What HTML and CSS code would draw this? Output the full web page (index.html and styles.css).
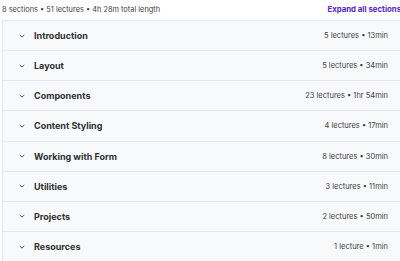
FILE: index.html
```html
<!DOCTYPE html>
<html>
<head>
<meta charset="utf-8">
<link rel="stylesheet" href="styles.css">
</head>
<body>
<div class="wrap">
  <div class="top">
    <span class="summary">8 sections • 51 lectures • 4h 28m total length</span>
    <span class="expand">Expand all sections</span>
  </div>
  <div class="list">
    <div class="row"><span class="chev"><svg viewBox="0 0 10 10" width="8" height="8"><path d="M2.2 3.8 L5 6.4 L7.8 3.8" fill="none" stroke="#4a4c4e" stroke-width="1.2"/></svg></span><span class="title">Introduction</span><span class="meta">5 lectures • 13min</span></div>
    <div class="row"><span class="chev"><svg viewBox="0 0 10 10" width="8" height="8"><path d="M2.2 3.8 L5 6.4 L7.8 3.8" fill="none" stroke="#4a4c4e" stroke-width="1.2"/></svg></span><span class="title">Layout</span><span class="meta">5 lectures • 34min</span></div>
    <div class="row"><span class="chev"><svg viewBox="0 0 10 10" width="8" height="8"><path d="M2.2 3.8 L5 6.4 L7.8 3.8" fill="none" stroke="#4a4c4e" stroke-width="1.2"/></svg></span><span class="title">Components</span><span class="meta">23 lectures • 1hr 54min</span></div>
    <div class="row"><span class="chev"><svg viewBox="0 0 10 10" width="8" height="8"><path d="M2.2 3.8 L5 6.4 L7.8 3.8" fill="none" stroke="#4a4c4e" stroke-width="1.2"/></svg></span><span class="title">Content Styling</span><span class="meta">4 lectures • 17min</span></div>
    <div class="row"><span class="chev"><svg viewBox="0 0 10 10" width="8" height="8"><path d="M2.2 3.8 L5 6.4 L7.8 3.8" fill="none" stroke="#4a4c4e" stroke-width="1.2"/></svg></span><span class="title">Working with Form</span><span class="meta">8 lectures • 30min</span></div>
    <div class="row"><span class="chev"><svg viewBox="0 0 10 10" width="8" height="8"><path d="M2.2 3.8 L5 6.4 L7.8 3.8" fill="none" stroke="#4a4c4e" stroke-width="1.2"/></svg></span><span class="title">Utilities</span><span class="meta">3 lectures • 11min</span></div>
    <div class="row"><span class="chev"><svg viewBox="0 0 10 10" width="8" height="8"><path d="M2.2 3.8 L5 6.4 L7.8 3.8" fill="none" stroke="#4a4c4e" stroke-width="1.2"/></svg></span><span class="title">Projects</span><span class="meta">2 lectures • 50min</span></div>
    <div class="row"><span class="chev"><svg viewBox="0 0 10 10" width="8" height="8"><path d="M2.2 3.8 L5 6.4 L7.8 3.8" fill="none" stroke="#4a4c4e" stroke-width="1.2"/></svg></span><span class="title">Resources</span><span class="meta">1 lecture • 1min</span></div>
  </div>
</div>
</body>
</html>
```
FILE: styles.css
```css
html, body {
  margin: 0;
  padding: 0;
  background: #ffffff;
  overflow: hidden;
}
.wrap {
  width: 410px;
  padding-left: 2px;
  font-family: Inter, "Noto Sans", sans-serif;
  color: #2d2f31;
}
.top {
  height: 20px;
  display: flex;
  justify-content: space-between;
  align-items: center;
  padding-right: 11px;
  box-sizing: border-box;
  padding-bottom: 2px;
}
.summary {
  font-size: 7.4px;
  color: #3e4143;
}
.expand {
  font-size: 7.8px;
  font-weight: 700;
  color: #5624d0;
}
.list {
  border: 1px solid #e4e7ea;
  border-right: 0;
}
.row {
  height: 29.15px;
  background: #f7f9fa;
  border-bottom: 1px solid #e4e7ea;
  display: flex;
  align-items: center;
  padding-left: 15px;
  padding-right: 24px;
}
.row:last-child { border-bottom: 0; }
.chev {
  width: 16px;
  display: flex;
  align-items: center;
}
.title {
  font-size: 9px;
  font-weight: 700;
  color: #2d2f31;
  flex: 1;
}
.meta {
  font-size: 7.5px;
  color: #3e4143;
}
```
